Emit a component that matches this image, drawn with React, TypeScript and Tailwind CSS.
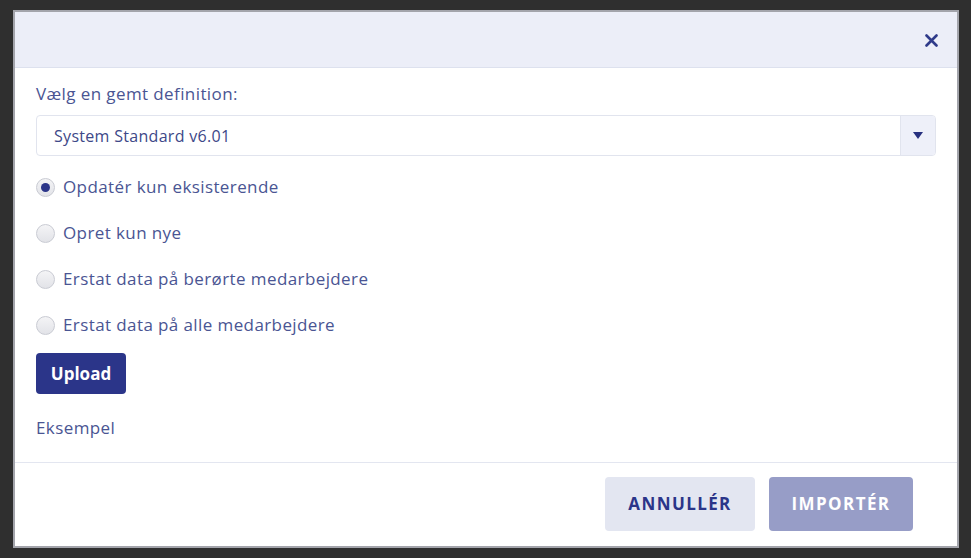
import { useState } from "react"

const options = [
  "Opdatér kun eksisterende",
  "Opret kun nye",
  "Erstat data på berørte medarbejdere",
  "Erstat data på alle medarbejdere",
]

function Radio({ checked }: { checked: boolean }) {
  return (
    <span className="w-[19px] h-[19px] rounded-full border border-[#c9cbd3] bg-gradient-to-b from-[#f4f4f6] to-[#e2e3e8] flex items-center justify-center shrink-0">
      {checked && <span className="w-[9px] h-[9px] rounded-full bg-[#2b3589]" />}
    </span>
  )
}

export default function App() {
  const [selected, setSelected] = useState(0)

  return (
    <div
      className="h-[558px] w-[971px] bg-[#2f2f2f] pt-[10px] pl-[13px] overflow-hidden"
      style={{ fontFamily: '"Open Sans", "Noto Sans", sans-serif' }}
    >
      <div className="w-[946px] h-[538px] border-2 border-[#a3a4ab] bg-white flex flex-col">
        {/* header */}
        <div className="h-[56px] bg-[#eceef8] border-b border-[#dde1ee] flex items-center justify-end pr-[19px]">
          <svg width="13" height="13" viewBox="0 0 13 13" className="mt-[2px]">
            <path d="M1.5 1.5 L11.5 11.5 M11.5 1.5 L1.5 11.5" stroke="#2f3a8a" strokeWidth="2.6" strokeLinecap="round" />
          </svg>
        </div>

        {/* body */}
        <div className="px-[21px] pt-[16px] pb-[24px] border-b border-[#e3e6f0]">
          <div className="text-[17px] leading-5 tracking-[0.4px] text-[#4a5593]">Vælg en gemt definition:</div>
          <div className="mt-[11px] h-[41px] border border-[#e1e4ee] rounded-[4px] flex overflow-hidden">
            <div className="flex-1 flex items-center pl-[17px] text-[16px] tracking-[0.3px] text-[#3d4888]">System Standard v6.01</div>
            <div className="w-[35px] bg-[#eef0f9] border-l border-[#e1e4ee] flex items-center justify-center">
              <svg width="10" height="7" viewBox="0 0 10 7">
                <path d="M0 0 H10 L5 7 Z" fill="#27307f" />
              </svg>
            </div>
          </div>

          <div className="mt-[8px] flex flex-col">
            {options.map((o, i) => (
              <label key={o} className="h-[46px] flex items-center gap-[8px] cursor-pointer" onClick={() => setSelected(i)}>
                <Radio checked={selected === i} />
                <span className="text-[17px] tracking-[0.4px] text-[#4a5593]">{o}</span>
              </label>
            ))}
          </div>

          <button className="mt-[5px] h-[41px] w-[90px] rounded-[4px] bg-[#2b3589] text-white font-bold text-[17px]">
            Upload
          </button>

          <div className="mt-[24px] text-[17px] leading-5 tracking-[0.4px] text-[#4a5593]">Eksempel</div>
        </div>

        {/* footer */}
        <div className="flex-1 flex items-start justify-end gap-[14px] pt-[14px] pr-[44px]">
          <button className="h-[54px] w-[150px] rounded-[4px] bg-[#e3e6f1] text-[#2b3589] font-bold text-[17px] tracking-[1.4px]">
            ANNULLÉR
          </button>
          <button className="h-[54px] w-[144px] rounded-[4px] bg-[#979dc7] text-white font-bold text-[17px] tracking-[1.4px]">
            IMPORTÉR
          </button>
        </div>
      </div>
    </div>
  )
}
